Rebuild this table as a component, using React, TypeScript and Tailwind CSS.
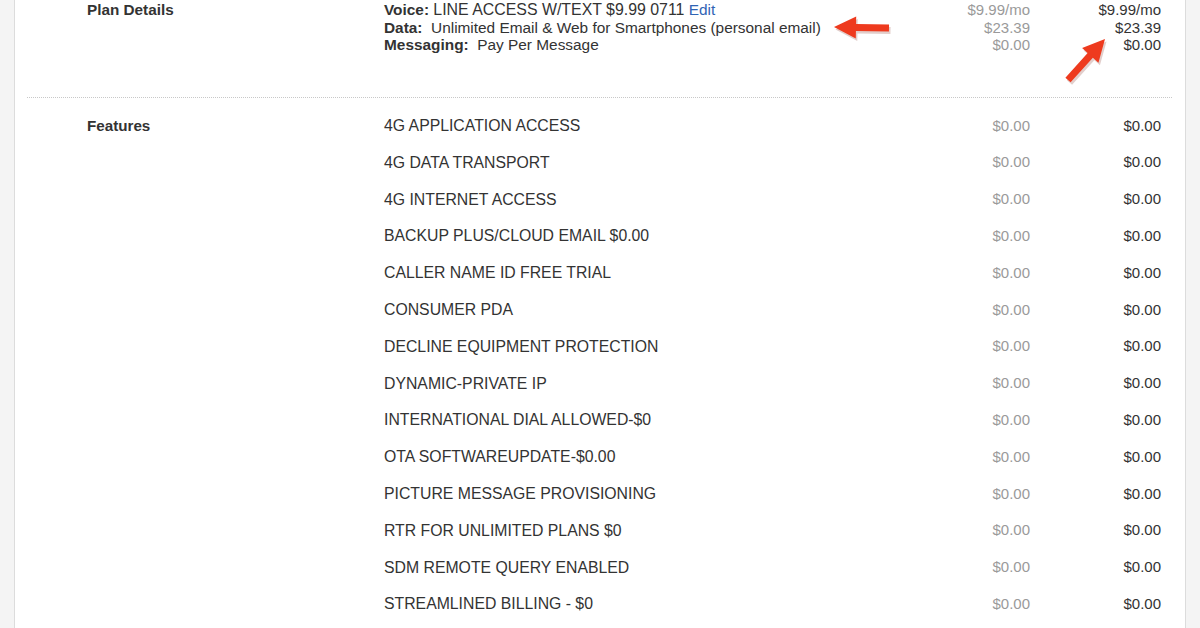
import React from "react";

const features = [
  "4G APPLICATION ACCESS",
  "4G DATA TRANSPORT",
  "4G INTERNET ACCESS",
  "BACKUP PLUS/CLOUD EMAIL $0.00",
  "CALLER NAME ID FREE TRIAL",
  "CONSUMER PDA",
  "DECLINE EQUIPMENT PROTECTION",
  "DYNAMIC-PRIVATE IP",
  "INTERNATIONAL DIAL ALLOWED-$0",
  "OTA SOFTWAREUPDATE-$0.00",
  "PICTURE MESSAGE PROVISIONING",
  "RTR FOR UNLIMITED PLANS $0",
  "SDM REMOTE QUERY ENABLED",
  "STREAMLINED BILLING - $0",
];

function Arrow({ x1, y1, x2, y2 }: { x1: number; y1: number; x2: number; y2: number }) {
  const dx = x2 - x1;
  const dy = y2 - y1;
  const len = Math.sqrt(dx * dx + dy * dy);
  const ux = dx / len;
  const uy = dy / len;
  const px = -uy;
  const py = ux;
  const headLen = 22;
  const headW = 11;
  const shaft = 3.5;
  const bx = x2 - ux * headLen;
  const by = y2 - uy * headLen;
  const pts = [
    [x1 + px * shaft, y1 + py * shaft],
    [bx + px * shaft, by + py * shaft],
    [bx + px * headW, by + py * headW],
    [x2, y2],
    [bx - px * headW, by - py * headW],
    [bx - px * shaft, by - py * shaft],
    [x1 - px * shaft, y1 - py * shaft],
  ]
    .map((p) => p.join(","))
    .join(" ");
  return (
    <g>
      <polygon points={pts} fill="#7a2010" opacity="0.22" transform="translate(1.5,2.5)" />
      <polygon points={pts} fill="#ee3a1e" />
    </g>
  );
}

export default function App() {
  return (
    <div
      className="relative flex w-[1200px] h-[628px] overflow-hidden bg-white text-[#333]"
      style={{ fontFamily: '"Liberation Sans", Arial, sans-serif' }}
    >
      <div className="w-[15px] shrink-0 bg-[#f4f4f4] border-r border-[#dcdcdc]" />
      <div className="flex-1 flex flex-col bg-white">
        {/* Plan details */}
        <div className="flex pt-[1px] pl-[72px] pr-[24px] text-[15px] leading-[17.5px]">
          <div className="w-[297px] shrink-0 font-bold text-[15.3px]">Plan Details</div>
          <div className="flex-1 text-[15.4px]">
            <div>
              <span className="font-bold">Voice:</span>{" "}
              <span className="text-[15.9px]">LINE ACCESS W/TEXT $9.99 0711</span>{" "}
              <span className="text-[#2f64b4]">Edit</span>
            </div>
            <div>
              <span className="font-bold">Data:</span>&nbsp; Unlimited Email &amp; Web for Smartphones (personal email)
            </div>
            <div>
              <span className="font-bold">Messaging:</span>&nbsp; Pay Per Message
            </div>
          </div>
          <div className="w-[160px] shrink-0 text-right text-[#9a9a9a]">
            <div>$9.99/mo</div>
            <div>$23.39</div>
            <div>$0.00</div>
          </div>
          <div className="w-[131px] shrink-0 text-right">
            <div>$9.99/mo</div>
            <div>$23.39</div>
            <div>$0.00</div>
          </div>
        </div>

        <div className="mt-[43px] ml-[12px] mr-[13px] border-t border-dotted border-[#c8c8c8]" />

        {/* Features */}
        <div className="flex pt-[10px] pl-[72px] pr-[24px] text-[15px]">
          <div className="w-[297px] shrink-0 font-bold leading-[36.8px] text-[15.2px]">Features</div>
          <div className="flex-1 flex flex-col">
            {features.map((f) => (
              <div key={f} className="flex h-[36.8px] items-center">
                <div className="flex-1 text-[15.8px]">{f}</div>
                <div className="w-[160px] shrink-0 text-right text-[#9a9a9a]">$0.00</div>
                <div className="w-[131px] shrink-0 text-right">$0.00</div>
              </div>
            ))}
          </div>
        </div>
      </div>
      <div className="w-[15px] shrink-0 bg-[#f4f4f4] border-l border-[#dcdcdc]" />

      <svg className="absolute left-0 top-0 pointer-events-none" width="1200" height="628">
        <Arrow x1={889} y1={28} x2={834} y2={27} />
        <Arrow x1={1068} y1={80} x2={1105} y2={39} />
      </svg>
    </div>
  );
}
